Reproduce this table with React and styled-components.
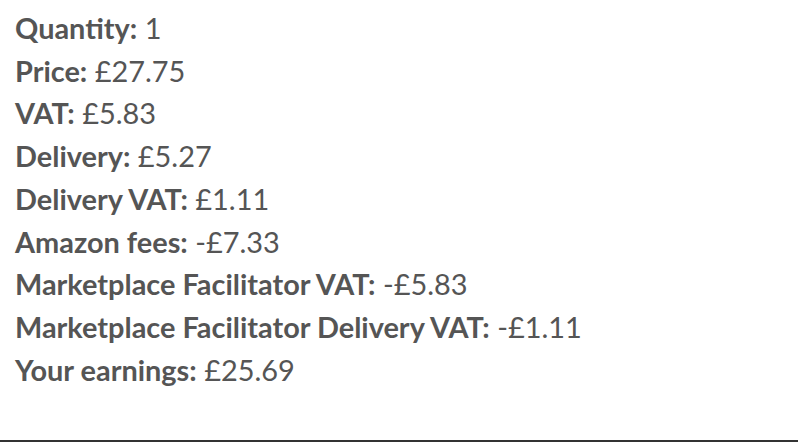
import React from 'react';
import styled, { createGlobalStyle } from 'styled-components';

const GlobalStyle = createGlobalStyle`
  html, body {
    margin: 0;
    padding: 0;
    background: #fff;
  }
  body {
    font-family: Lato, "Liberation Sans", sans-serif;
  }
`;

const Page = styled.div`
  width: 798px;
  height: 442px;
  box-sizing: border-box;
  display: flex;
  flex-direction: column;
  border-bottom: 2px solid #333;
`;

const List = styled.div`
  display: flex;
  flex-direction: column;
  padding: 7px 15px 0;
  flex: 1;
`;

const Row = styled.div`
  font-size: 28.9px;
  line-height: 42.7px;
  color: #555;
  white-space: nowrap;
`;

const Label = styled.strong`
  font-weight: 700;
`;

const rows = [
  ['Quantity:', '1'],
  ['Price:', '£27.75'],
  ['VAT:', '£5.83'],
  ['Delivery:', '£5.27'],
  ['Delivery VAT:', '£1.11'],
  ['Amazon fees:', '-£7.33'],
  ['Marketplace Facilitator VAT:', '-£5.83'],
  ['Marketplace Facilitator Delivery VAT:', '-£1.11'],
  ['Your earnings:', '£25.69'],
];

function App() {
  return (
    <>
      <GlobalStyle />
      <Page>
        <List>
          {rows.map(([label, value]) => (
            <Row key={label}>
              <Label>{label}</Label> {value}
            </Row>
          ))}
        </List>
      </Page>
    </>
  );
}

export default App;
